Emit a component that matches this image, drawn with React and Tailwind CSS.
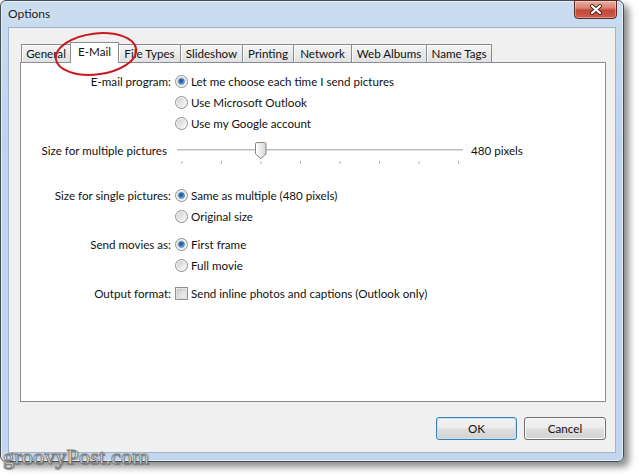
import React from 'react';

const tabs = [
  { label: 'General', w: 'w-[49px]' },
  { label: 'E-Mail', w: 'w-[49px]', active: true },
  { label: 'File Types', w: 'w-[61px]' },
  { label: 'Slideshow', w: 'w-[62px]' },
  { label: 'Printing', w: 'w-[51px]' },
  { label: 'Network', w: 'w-[58px]' },
  { label: 'Web Albums', w: 'w-[75px]' },
  { label: 'Name Tags', w: 'w-[66px]' },
];

function Radio({ checked, id }) {
  return (
    <svg width="13" height="13" viewBox="0 0 13 13" className="shrink-0">
      <defs>
        <linearGradient id={`rf${id}`} x1="0" y1="0" x2="1" y2="1">
          <stop offset="0" stopColor="#cfcfcf" />
          <stop offset="1" stopColor="#fbfbfb" />
        </linearGradient>
        <radialGradient id={`rd${id}`} cx="0.45" cy="0.4" r="0.6">
          <stop offset="0" stopColor="#1b4f8a" />
          <stop offset="0.55" stopColor="#2f78c2" />
          <stop offset="1" stopColor="#9fd0f5" />
        </radialGradient>
      </defs>
      <circle cx="6.5" cy="6.5" r="6" fill="#f4f4f4" stroke="#8e8f8f" />
      <circle cx="6.5" cy="6.5" r="4.5" fill={`url(#rf${id})`} />
      {checked && <circle cx="6.5" cy="6.5" r="3" fill={`url(#rd${id})`} stroke="#2a5f95" strokeWidth="0.6" />}
    </svg>
  );
}

function Checkbox() {
  return (
    <svg width="13" height="13" viewBox="0 0 13 13" className="shrink-0">
      <defs>
        <linearGradient id="cbf" x1="0" y1="0" x2="1" y2="1">
          <stop offset="0" stopColor="#cbcbcb" />
          <stop offset="1" stopColor="#f7f7f7" />
        </linearGradient>
      </defs>
      <rect x="0.5" y="0.5" width="12" height="12" fill="#f4f4f4" stroke="#8e8f8f" />
      <rect x="2" y="2" width="9" height="9" fill="url(#cbf)" stroke="#b8b8b8" strokeWidth="0.5" />
    </svg>
  );
}

function Option({ checked, id, children }) {
  return (
    <div className="flex items-center gap-[3px]">
      <Radio checked={checked} id={id} />
      <span>{children}</span>
    </div>
  );
}

function Row({ label, children, className = '' }) {
  return (
    <div className={`flex items-center h-[21px] ${className}`}>
      <div className="w-[150px] text-right whitespace-nowrap">{label}</div>
      <div className="ml-[4px] flex items-center">{children}</div>
    </div>
  );
}

function Slider() {
  const ticks = [4.5, 44, 83.5, 123, 162.5, 202, 241.5, 281];
  return (
    <svg width="286" height="23" viewBox="0 0 286 23" className="mt-[2px] ml-[6px] shrink-0">
      <defs>
        <linearGradient id="thumb" x1="0" y1="0" x2="1" y2="0">
          <stop offset="0" stopColor="#ffffff" />
          <stop offset="1" stopColor="#d6d6d6" />
        </linearGradient>
      </defs>
      <rect x="0" y="7" width="286" height="1" fill="#b9b9b9" />
      <rect x="0" y="8" width="286" height="1" fill="#e4e4e4" />
      {ticks.map((t) => (
        <rect key={t} x={t} y="19" width="1" height="3" fill="#b3b3b3" />
      ))}
      <path
        d="M78.5 2 Q78.5 0.5 80 0.5 H87.5 Q89 0.5 89 2 V12 L83.75 16.5 L78.5 12 Z"
        fill="url(#thumb)"
        stroke="#868686"
      />
      <path d="M80 2.5 V11.5" stroke="#ffffff" />
    </svg>
  );
}

function CloseButton() {
  return (
    <div className="self-start -mt-px -mr-px w-[43px] h-[19px] rounded-b-[4px] border border-[#5b2a24] bg-[linear-gradient(180deg,#eab0a4_0%,#d98374_40%,#c24736_55%,#cf5e4c_100%)] shadow-[inset_0_0_0_1px_rgba(255,255,255,0.35)] flex items-center justify-center">
      <svg width="14" height="11" viewBox="0 0 14 11">
        <path d="M3 2 L11 9 M11 2 L3 9" stroke="#4a2520" strokeWidth="4" strokeLinecap="round" />
        <path d="M3 2 L11 9 M11 2 L3 9" stroke="#ffffff" strokeWidth="2.2" strokeLinecap="round" />
      </svg>
    </div>
  );
}

function Button({ children, primary }) {
  return (
    <div
      className={`h-[23px] rounded-[3px] border flex items-center justify-center bg-[linear-gradient(180deg,#f3f3f3_0%,#ececec_48%,#dedede_52%,#d2d2d2_100%)] ${
        primary
          ? 'w-[81px] border-[#3c7fb1] shadow-[inset_0_0_0_1px_#bfe4f8]'
          : 'w-[82px] border-[#707070] shadow-[inset_0_0_0_1px_#fbfbfb]'
      }`}
    >
      {children}
    </div>
  );
}

export default function App() {
  return (
    <div className="w-[640px] h-[475px] bg-white relative overflow-hidden font-['Lato','Noto_Sans',sans-serif] text-[11.6px] text-[#111]">
      <div className="w-[624px] h-[462px] rounded-[6px] border border-[#474c52] bg-[linear-gradient(180deg,#c9dcf0_0%,#bfd5ec_30%,#c2d7ee_100%)] px-[7px] pb-[8px] flex flex-col shadow-[inset_0_0_0_1px_rgba(255,255,255,0.55),5px_5px_7px_rgba(0,0,0,0.45)]">
        <div className="h-[26px] flex justify-between items-center shrink-0">
          <span className="text-[12px] text-[#1a1a1a] [text-shadow:0_0_6px_#ffffff]">Options</span>
          <CloseButton />
        </div>

        <div className="flex-1 bg-[#f0f0f0] border border-[#9fb3c9] pt-[14px] pl-[11px] pr-[9px] flex flex-col">
          <div className="flex items-end h-[20px] pl-px">
            {tabs.map((t, i) =>
              t.active ? (
                <div
                  key={t.label}
                  className={`${t.w} h-[21px] -mb-px relative z-10 bg-white border border-b-0 border-[#898c95] flex items-center justify-center pb-[2px]`}
                >
                  {t.label}
                </div>
              ) : (
                <div
                  key={t.label}
                  className={`${t.w} h-[18px] border-t border-[#898c95] ${i === 2 ? '' : 'border-l'} ${
                    i === tabs.length - 1 ? 'border-r' : ''
                  } bg-[linear-gradient(180deg,#f4f4f4_0%,#ebebeb_50%,#e1e1e1_100%)] shadow-[inset_1px_1px_0_#fcfcfc] flex items-center justify-center whitespace-nowrap`}
                >
                  {t.label}
                </div>
              )
            )}
          </div>

          <div className="h-[340px] bg-white border border-[#898c95] pt-[8px] flex flex-col">
            <Row label="E-mail program:">
              <Option checked id="a">Let me choose each time I send pictures</Option>
            </Row>
            <Row label="">
              <Option id="b">Use Microsoft Outlook</Option>
            </Row>
            <Row label="">
              <Option id="c">Use my Google account</Option>
            </Row>

            <div className="flex items-start mt-[6px]">
              <div className="w-[150px] h-[21px] flex items-center justify-end pr-[4px] whitespace-nowrap">
                Size for multiple pictures
              </div>
              <Slider />
              <div className="h-[21px] flex items-center ml-[8px]">480 pixels</div>
            </div>

            <Row label="Size for single pictures:" className="mt-[20px]">
              <Option checked id="d">Same as multiple (480 pixels)</Option>
            </Row>
            <Row label="">
              <Option id="e">Original size</Option>
            </Row>

            <Row label="Send movies as:" className="mt-[7px]">
              <Option checked id="f">First frame</Option>
            </Row>
            <Row label="">
              <Option id="g">Full movie</Option>
            </Row>

            <Row label="Output format:" className="mt-[7px]">
              <div className="flex items-center gap-[3px]">
                <Checkbox />
                <span>Send inline photos and captions (Outlook only)</span>
              </div>
            </Row>
          </div>

          <div className="flex justify-end gap-[7px] mt-[15px]">
            <Button primary>OK</Button>
            <Button>Cancel</Button>
          </div>
        </div>
      </div>

      <svg className="absolute left-[50px] top-[26px] pointer-events-none" width="96" height="56" viewBox="0 0 96 56">
        <ellipse cx="46" cy="28" rx="40.5" ry="20.5" transform="rotate(-7 46 28)" fill="none" stroke="#c8191e" strokeWidth="2" />
      </svg>

      <div className="absolute left-[3px] top-[440px] font-['Liberation_Serif',serif] text-[22px] text-white [-webkit-text-stroke:1px_#7e7e7e] [text-shadow:1px_1px_1px_rgba(0,0,0,0.3)] tracking-[0.2px]">
        groovyPost.com
      </div>
    </div>
  );
}
